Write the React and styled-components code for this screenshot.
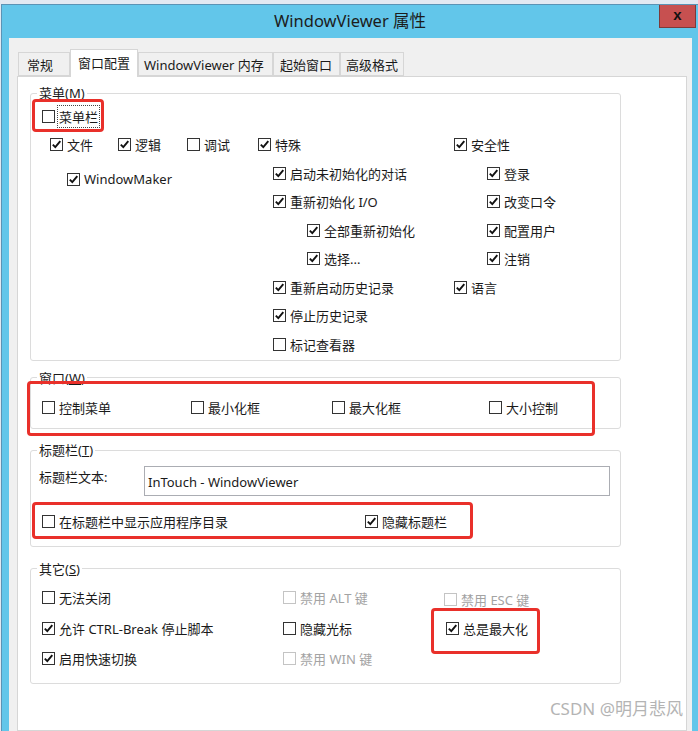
import React from "react";
import styled, { createGlobalStyle } from "styled-components";

const Global = createGlobalStyle`
  html, body {
    margin: 0;
    padding: 0;
    background: #e2e9f2;
    overflow: hidden;
  }
  body {
    font-family: "Noto Sans", "Noto Sans CJK SC", sans-serif;
    font-size: 13px;
    color: #1a1a1a;
  }
`;

const Window = styled.div`
  margin: 4px 0 0 1px;
  height: 727px;
  box-sizing: border-box;
  border-top: 1px solid #5b93b5;
  border-left: 1px solid #5b93b5;
  background: #62c6ea;
  display: flex;
  flex-direction: column;
`;

const TitleBar = styled.div`
  height: 33px;
  display: grid;
  grid-template-columns: 1fr auto 1fr;
  align-items: center;
`;

const Title = styled.div`
  grid-column: 2;
  font-size: 16.5px;
  color: #1c1c1c;
  padding-bottom: 3px;
`;

const CloseButton = styled.div`
  grid-column: 3;
  justify-self: end;
  align-self: start;
  width: 37px;
  height: 23px;
  box-sizing: border-box;
  margin-right: 2px;
  background: #c75050;
  border: 1px solid #7d3a3a;
  border-top: none;
  display: flex;
  align-items: center;
  justify-content: center;
  font-family: "Liberation Sans", sans-serif;
  font-weight: 700;
  font-size: 15px;
  color: #111;
  line-height: 1;
  padding-bottom: 3px;
`;

const Panel = styled.div`
  flex: 1;
  margin: 0 6px 0 7px;
  background: #f0f0f0;
  padding: 11px 5px 0 8px;
  display: flex;
  flex-direction: column;
`;

const TabRow = styled.div`
  display: flex;
  align-items: flex-end;
  height: 27px;
  padding-left: 1px;
  position: relative;
  z-index: 1;
`;

const Tab = styled.div`
  width: ${p => p.$w}px;
  box-sizing: border-box;
  height: ${p => (p.$active ? 28 : 24)}px;
  margin-bottom: ${p => (p.$active ? -1 : 0)}px;
  padding: 0 0 ${p => (p.$active ? 3 : 0)}px ${p => p.$pad}px;
  border: 1px solid #d6d6d6;
  border-bottom: ${p => (p.$active ? "none" : "1px solid #d6d6d6")};
  background: ${p => (p.$active ? "#fff" : "#f0f0f0")};
  display: flex;
  align-items: center;
  white-space: nowrap;
  color: #1a1a1a;
`;

const TabPage = styled.div`
  flex: 1;
  background: #fff;
  border: 1px solid #d6d6d6;
  padding: 8px 0 0 12px;
  display: flex;
  flex-direction: column;
`;

const Group = styled.fieldset`
  width: 591px;
  box-sizing: border-box;
  margin: ${p => p.$gap || 0}px 0 0 0;
  padding: 0;
  min-width: 0;
  border: 1px solid #dcdcdc;
  border-radius: 3px;
`;

const Legend = styled.legend`
  margin-left: 6px;
  padding: 0 2px;
  line-height: 16px;
  font-size: 13px;
  color: #1a1a1a;
`;

const Body = styled.div`
  position: relative;
  padding: ${p => p.$pad};
`;

const Mark = styled.div`
  position: absolute;
  left: ${p => p.$x}px;
  top: ${p => p.$y}px;
  width: ${p => p.$w}px;
  height: ${p => p.$h}px;
  box-sizing: border-box;
  border: 3px solid #e9302a;
  border-radius: 4px;
  pointer-events: none;
`;

const Line = styled.div`
  display: flex;
  margin-left: ${p => p.$indent || 0}px;
`;

const Cell = styled.div`
  width: ${p => (p.$w ? `${p.$w}px` : "auto")};
  flex-shrink: 0;
`;

const Row = styled.div`
  display: flex;
  align-items: center;
  gap: 4px;
  height: ${p => p.$h || 28.5}px;
  margin-left: ${p => p.$indent || 0}px;
  margin-top: ${p => p.$top || 0}px;
  white-space: nowrap;
  color: ${p => (p.$disabled ? "#a3a3a3" : "#1a1a1a")};
`;

const Box = styled.span`
  width: 13px;
  height: 13px;
  box-sizing: border-box;
  border: 1px solid ${p => (p.$disabled ? "#c4c4c4" : "#333")};
  background: #fff;
  display: inline-flex;
  align-items: center;
  justify-content: center;
  flex-shrink: 0;
`;

const Focus = styled.span`
  outline: 1px dotted #444;
  outline-offset: 1px;
`;

const FieldRow = styled.div`
  display: flex;
  align-items: flex-start;
`;

const FieldLabel = styled.div`
  width: 105px;
  margin: 3px 0 0 -3px;
  line-height: 16px;
`;

const Input = styled.div`
  width: 466px;
  height: 30px;
  box-sizing: border-box;
  border: 1px solid #abadb3;
  background: #fff;
  padding: 2px 0 0 3px;
  display: flex;
  align-items: center;
`;

const OtherGrid = styled.div`
  display: grid;
  grid-template-columns: 241px 161px auto;
`;

const Watermark = styled.div`
  align-self: flex-end;
  margin: 15px 3px 0 0;
  font-size: 17px;
  line-height: 20px;
  color: #b4b4b4;
`;

const Tick = () => (
  <svg width="11" height="11" viewBox="0 0 11 11">
    <path d="M1.8 5.6 L4.3 8.2 L9.3 2.2" fill="none" stroke="#111" strokeWidth="1.9" />
  </svg>
);

const Check = ({ label, checked, disabled, focus, indent, top, h }) => (
  <Row $indent={indent} $top={top} $h={h} $disabled={disabled}>
    <Box $disabled={disabled}>{checked && <Tick />}</Box>
    {focus ? <Focus>{label}</Focus> : <span>{label}</span>}
  </Row>
);

const tabs = [
  { label: "常规", w: 52, pad: 8 },
  { label: "窗口配置", w: 68, pad: 7, active: true },
  { label: "WindowViewer 内存", w: 135, pad: 5 },
  { label: "起始窗口", w: 67, pad: 6 },
  { label: "高级格式", w: 64, pad: 5 },
];

export default function App() {
  return (
    <>
      <Global />
      <Window>
        <TitleBar>
          <Title>WindowViewer 属性</Title>
          <CloseButton>x</CloseButton>
        </TitleBar>
        <Panel>
          <TabRow>
            {tabs.map(t => (
              <Tab key={t.label} $w={t.w} $pad={t.pad} $active={t.active}>
                {t.label}
              </Tab>
            ))}
          </TabRow>
          <TabPage>
            <Group>
              <Legend>菜单(M)</Legend>
              <Body $pad="1px 0 1px 11px">
                <Check label="菜单栏" focus />
                <Line $indent={8}>
                  <Cell $w={68}><Check label="文件" checked /></Cell>
                  <Cell $w={69}><Check label="逻辑" checked /></Cell>
                  <Cell $w={71}><Check label="调试" /></Cell>
                  <Cell $w={196}><Check label="特殊" checked /></Cell>
                  <Cell><Check label="安全性" checked /></Cell>
                </Line>
                <Line $indent={8}>
                  <Cell $w={208}>
                    <Check label="WindowMaker" checked indent={17} top={6} />
                  </Cell>
                  <Cell $w={196}>
                    <Check label="启动未初始化的对话" checked indent={15} />
                    <Check label="重新初始化 I/O" checked indent={15} />
                    <Check label="全部重新初始化" checked indent={49} />
                    <Check label="选择..." checked indent={49} />
                    <Check label="重新启动历史记录" checked indent={15} />
                    <Check label="停止历史记录" checked indent={15} />
                    <Check label="标记查看器" indent={15} />
                  </Cell>
                  <Cell>
                    <Check label="登录" checked indent={33} />
                    <Check label="改变口令" checked indent={33} />
                    <Check label="配置用户" checked indent={33} />
                    <Check label="注销" checked indent={33} />
                    <Check label="语言" checked />
                  </Cell>
                </Line>
                <Mark $x={1} $y={-2} $w={72} $h={33} />
              </Body>
            </Group>

            <Group $gap={9}>
              <Legend>窗口(<u>W</u>)</Legend>
              <Body $pad="8px 0 6px 11px">
                <Line>
                  <Cell $w={149}><Check label="控制菜单" /></Cell>
                  <Cell $w={141}><Check label="最小化框" /></Cell>
                  <Cell $w={157}><Check label="最大化框" /></Cell>
                  <Cell><Check label="大小控制" /></Cell>
                </Line>
                <Mark $x={-4} $y={-5} $w={568} $h={55} />
              </Body>
            </Group>

            <Group $gap={13}>
              <Legend>标题栏(<u>T</u>)</Legend>
              <Body $pad="8px 0 10px 11px">
                <FieldRow>
                  <FieldLabel>标题栏文本:</FieldLabel>
                  <Input>InTouch - WindowViewer</Input>
                </FieldRow>
                <Line>
                  <Cell $w={323}>
                    <Check label="在标题栏中显示应用程序目录" top={11} />
                  </Cell>
                  <Cell>
                    <Check label="隐藏标题栏" checked top={11} />
                  </Cell>
                </Line>
                <Mark $x={1} $y={44} $w={441} $h={37} />
              </Body>
            </Group>

            <Group $gap={14}>
              <Legend>其它(<u>S</u>)</Legend>
              <Body $pad="6px 0 10px 11px">
                <OtherGrid>
                  <Check label="无法关闭" h={29.5} />
                  <Check label="禁用 ALT 键" disabled h={29.5} />
                  <Check label="禁用 ESC 键" disabled h={29.5} top={2} />
                  <Check label="允许 CTRL-Break 停止脚本" checked h={29.5} />
                  <Check label="隐藏光标" h={29.5} />
                  <Check label="总是最大化" checked h={29.5} indent={2} />
                  <Check label="启用快速切换" checked h={29.5} />
                  <Check label="禁用 WIN 键" disabled h={29.5} />
                </OtherGrid>
                <Mark $x={400} $y={31} $w={109} $h={46} />
              </Body>
            </Group>

            <Watermark>CSDN @明月悲风</Watermark>
          </TabPage>
        </Panel>
      </Window>
    </>
  );
}
